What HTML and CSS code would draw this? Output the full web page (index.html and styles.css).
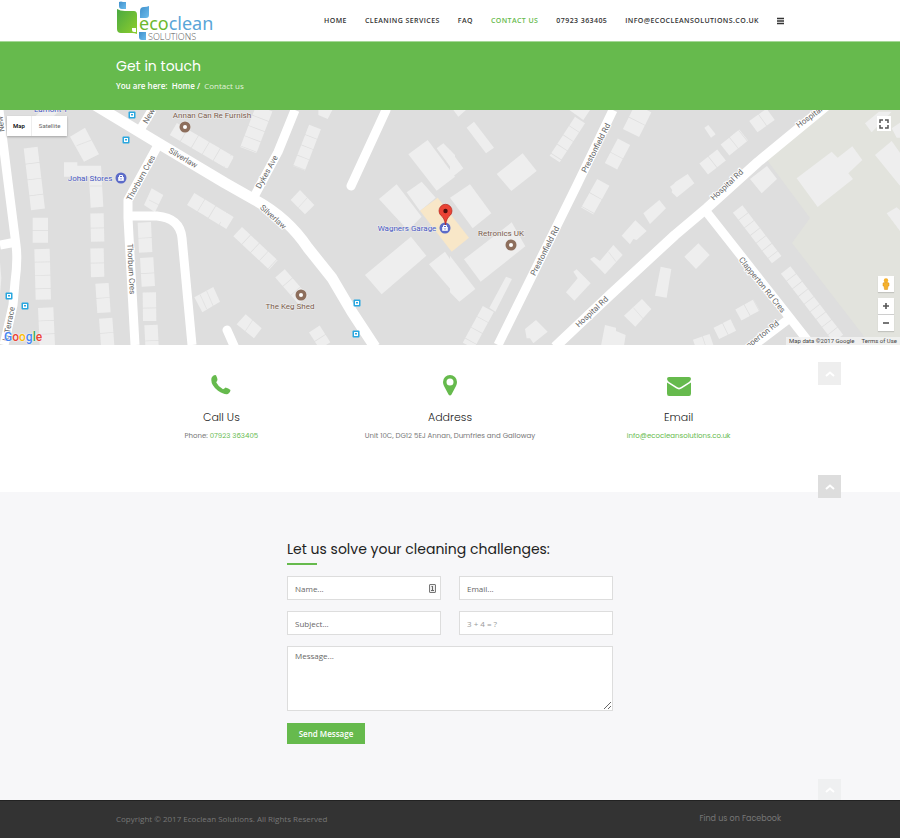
FILE: index.html
```html
<!DOCTYPE html>
<html lang="en">
<head>
<meta charset="utf-8">
<title>Contact us - Ecoclean Solutions</title>
<meta name="viewport" content="width=device-width, initial-scale=1">
<link rel="stylesheet" href="styles.css">
</head>
<body>
<header class="site-header">
  <div class="container header-row">
    <a class="logo" href="#" aria-label="Ecoclean Solutions">
      <svg width="100" height="41" viewBox="0 0 100 41">
        <defs>
          <linearGradient id="leaf" x1="0" y1="0" x2="1" y2="1"><stop offset="0" stop-color="#49a942"/><stop offset="1" stop-color="#8fce2c"/></linearGradient>
          <linearGradient id="sky" x1="0" y1="0" x2="1" y2="1"><stop offset="0" stop-color="#3f8fcb"/><stop offset="1" stop-color="#6cbcec"/></linearGradient>
        </defs>
        <path d="M1 9Q4 11 9 11H18Q21 11 21 15V34Q19 33 16 33H5Q1 33 1 29z" fill="url(#leaf)"/>
        <path d="M3 2Q5 1 7 2H10V9H6Q3 9 3 6z" fill="url(#sky)"/>
        <path d="M33 6V15Q33 18 30 18H24V11Q24 7 28 7 31 7 33 6z" fill="url(#sky)"/>
        <path d="M16 28H20V32H18Q16 32 16 30z" fill="#fff"/>
        <path d="M23 32H30V40H26Q23 40 23 37z" fill="url(#sky)"/>
        <text class="logo-name" x="23" y="30"><tspan fill="#6cb82e">eco</tspan><tspan fill="#59a5d8">clean</tspan></text>
        <text class="logo-sub" x="32" y="40">SOLUTIONS</text>
      </svg>
    </a>
    <nav class="main-nav" aria-label="Main">
      <a href="#">HOME</a>
      <a href="#">CLEANING SERVICES</a>
      <a href="#">FAQ</a>
      <a class="active" href="#">CONTACT US</a>
      <a href="#">07923 363405</a>
      <a href="#">INFO@ECOCLEANSOLUTIONS.CO.UK</a>
      <button class="menu-button" type="button" aria-label="Open menu">
        <svg width="7" height="8" viewBox="0 0 7 8"><path d="M0 1.500h7M0 4h7M0 6.500h7" stroke="#333" stroke-width="1.400"/></svg>
      </button>
    </nav>
  </div>
</header>

<section class="banner">
  <div class="container">
    <h1>Get in touch</h1>
    <p class="crumbs">You are here: &nbsp;<a href="#">Home</a> / &nbsp;<span>Contact us</span></p>
  </div>
</section>

<section class="map" aria-label="Map">
  <svg class="map-canvas" viewBox="0 0 900 235" preserveAspectRatio="xMidYMid slice">
    <rect width="900" height="235" fill="#dedede"/>
    <path d="M822 0 767 50 810 108 792 133 863 225 870 235H900V0z" fill="#e2e3dd"/>
    <!-- house blocks, west -->
    <g transform="translate(0 -5) scale(.33333)" fill="#eee">
      <path d="M210 95 255 68 297 148 252 170zM192 172H232V182H303L310 305 272 308 267 215H192zM455 250 490 270 465 322 432 300zM583 577 640 546 660 590 607 622zM0 470V570L4 520zM100 40 125 15H180L150 45z"/>
      <g class="row">
        <path d="M92 128 114 313" stroke-width="42" stroke-dasharray="46 2"/>
        <path d="M121 338V413M126 432 130 584M137 608 142 722" stroke-width="46" stroke-dasharray="38 2"/>
        <path d="M291 325 293 410M291 430 293 516M306 535 312 624M317 640 323 722" stroke-width="40" stroke-dasharray="43 2"/>
        <path d="M433 352 437 442M440 458 445 544M448 562 449 648M453 660 456 722" stroke-width="40" stroke-dasharray="46 2"/>
        <path d="M520 72 690 172M572 282 690 354" stroke-width="42" stroke-dasharray="36 2"/>
      </g>
      <path d="M230 122 275 105M270 243H306M447 285 477 300M600 568 620 612M620 558 640 604" stroke="#dedede" stroke-width="2"/>
    </g>
    <!-- house blocks, centre west -->
    <g transform="translate(225 -5) scale(.33333)" fill="#eee">
      <path d="M0 140 25 158 8 190-20 175zM225 255 268 300 240 328 197 285zM0 320 18 335 0 362-15 350zM62 628 110 670 87 700 35 658zM280 15H322L308 42 280 30zM550 148 608 105 690 215 635 257zM635 130 655 115 690 150V205zM462 282 515 238 590 335 560 365 545 372zM545 262 590 230 632 278 585 318zM420 510 558 395 604 452 470 568zM612 478 660 440 700 500V580z"/>
      <path d="M585 317 638 278 732 398 680 440z" fill="#f8e7c8"/>
      <g class="row">
        <path d="M118 10 70 135" stroke-width="52" stroke-dasharray="31 2"/>
        <path d="M270 66 222 190" stroke-width="38" stroke-dasharray="31 2"/>
        <path d="M38 380 145 480M165 505 235 585" stroke-width="38" stroke-dasharray="34 2"/>
        <path d="M268 672 300 722" stroke-width="38" stroke-dasharray="31 2"/>
      </g>
      <path d="M85 642 60 680M248 277 220 308" stroke="#dedede" stroke-width="2"/>
    </g>
    <!-- house blocks, centre east -->
    <g transform="translate(450 -5) scale(.33333)" fill="#eee">
      <path d="M50 68 72 50 132 128 108 145zM140 207 218 145 260 198 184 258zM0 278 60 238 124 325 68 370zM0 135 40 190 0 222zM42 463 185 352 226 424 92 530zM0 452 76 552 28 590 0 562zM118 608 168 515 186 522 136 620zM10 15H48L25 35zM358 15H420L400 45zM580 325 628 285 648 310 600 357zM515 392 556 346 590 378 560 405 550 402 540 418zM420 462 432 455 450 468 490 420 518 450 465 508zM348 562 383 520 370 500 380 493 422 535 373 587zM632 485 664 492 650 578 615 572zM522 632 576 582 604 612 556 665zM225 672 258 645 293 680 250 715 240 700 230 700zM465 660 498 668V678L527 690 522 722H453zM660 245 680 230V275z"/>
      <g class="row">
        <path d="M390 45 314 162" stroke-width="36" stroke-dasharray="31 2"/>
        <path d="M115 612 55 722" stroke-width="38" stroke-dasharray="35 2"/>
        <path d="M580 10 543 84" stroke-width="54" stroke-dasharray="42 2"/>
        <path d="M522 110 483 184M460 232 412 318" stroke-width="42" stroke-dasharray="46 2"/>
      </g>
      <path d="M550 608 580 642M475 440 498 470" stroke="#dedede" stroke-width="2"/>
    </g>
    <!-- house blocks, east -->
    <g transform="translate(675 -5) scale(.33333)" fill="#eee">
      <path d="M88 68 100 60 122 88 108 98zM0 232 38 207 58 235 6 277-10 262zM225 222 276 183 306 222 260 265zM28 455 70 415 104 450 63 492zM365 220 470 140 488 158 532 124 562 165 520 205 534 222 428 306zM600 150 650 108 680 150V248zM635 325 665 307 680 320V385zM570 55 612 20H650L590 82zM650 70 680 50V98H665z"/>
      <g class="row">
        <path d="M86 192 140 150M150 135 206 90M235 65 287 28" stroke-width="42" stroke-dasharray="33 2"/>
        <path d="M188 312 305 464M332 495 490 700" stroke-width="36" stroke-dasharray="27 2"/>
        <path d="M190 630 245 600M124 685 175 660M60 722 110 705" stroke-width="38" stroke-dasharray="29 2"/>
      </g>
    </g>
    <g class="roads">
      <path d="M-1 0 8 72 16 135Q18 150 15 172L13 195 4 235M0 135 16 132M140 20 152 0M157 37 128 90V108L135 235M128 106H157Q180 108 182 128L192 235M255 85 278 42 295 0M613 0 577 75 498 235M790 208 750 238M705 100 790 208 815 240" stroke-width="9"/>
      <path d="M95-5 153 30 225 73 255 90Q288 108 308 138L332 168 352 202 375 237" stroke-width="11"/>
      <path d="M555 237 610 185 675 125 707 98 758 52 826-4" stroke-width="10"/>
      <path d="M386 0 351 76M227 220 235 238" stroke-width="9" stroke-linecap="round"/>
    </g>
    <g class="road-names">
      <text transform="translate(149 6) rotate(-60)">New</text>
      <text transform="translate(183 48) rotate(31)">Silverlaw</text>
      <text transform="translate(141 68) rotate(-61)">Thorburn Cres</text>
      <text transform="translate(131 159) rotate(87)">Thorburn Cres</text>
      <text transform="translate(267 62) rotate(-61)">Dykes Ave</text>
      <text transform="translate(273 107) rotate(42)">Silverlaw</text>
      <text transform="translate(596 38) rotate(-63)">Prestonfield Rd</text>
      <text transform="translate(545 141) rotate(-63)">Prestonfield Rd</text>
      <text transform="translate(592 202) rotate(-43)">Hospital Rd</text>
      <text transform="translate(727 75) rotate(-43)">Hospital Rd</text>
      <text transform="translate(814 4) rotate(-36)">Hospital Rd</text>
      <text transform="translate(762 175) rotate(51)">Clapperton Rd Cres</text>
      <text transform="translate(758 228) rotate(-38)">Clapperton Rd</text>
      <text transform="translate(9 214) rotate(-79)">lu Terrace</text>
      <text transform="translate(1 14) rotate(-97)">New</text>
    </g>
    <defs>
      <g id="bus"><rect x="-3.5" y="-3.5" width="7" height="7" rx="1" fill="#2aa7df"/><path d="M-2-2H2V2H-2z" fill="#fff"/><path d="M-1-1H1V.5H-1z" fill="#2aa7df"/></g>
      <g id="dot"><circle r="6" fill="#eee" opacity=".8"/><circle r="5.5" fill="#8d6e5c"/><circle r="2" fill="#fff"/></g>
      <g id="shop"><circle r="5.5" fill="#5c6bc8"/><path d="M-2.8-1H2.8V2.8H-2.8z" fill="#fff"/><path d="M-1.5-1V-2.5H1.5V-1" fill="none" stroke="#fff"/><path d="M-1.2.5Q0 2 1.2.5" fill="none" stroke="#5c6bc8" stroke-width=".7"/></g>
    </defs>
    <use href="#bus" x="132" y="5"/><use href="#bus" x="126" y="30"/><use href="#bus" x="9" y="186"/><use href="#bus" x="25" y="196"/><use href="#bus" x="357" y="193"/><use href="#bus" x="356" y="224"/>
    <use href="#dot" x="185" y="17"/><use href="#dot" x="301" y="185"/><use href="#dot" x="511" y="135"/>
    <use href="#shop" x="121" y="68"/><use href="#shop" x="445" y="118"/>
    <path d="M445.500 115Q444.500 108 441 105.500A6.500 6.500 0 1 1 450 105.500Q446.500 108 445.500 115z" fill="#ea4335" stroke="#b3251d" stroke-width=".7"/>
    <circle cx="445.500" cy="101" r="2.200" fill="#4a0f0d"/>
    <g class="places">
      <text class="brown" x="212" y="8">Annan Can Re Furnish</text>
      <text class="brown" x="290" y="199">The Keg Shed</text>
      <text class="brown" x="501" y="126">Retronics UK</text>
      <text class="blue" x="90" y="71">Johal Stores</text>
      <text class="blue" x="407" y="121">Wagners Garage</text>
      <text class="blue" x="51" y="2">Lamont T</text>
    </g>
  </svg>
  <div class="map-type">
    <button class="selected" type="button">Map</button><button type="button">Satellite</button>
  </div>
  <button class="map-full" type="button" aria-label="Full screen"><svg width="10" height="10" viewBox="0 0 10 10"><path d="M1 4V1H4M6 1H9V4M9 6V9H6M4 9H1V6" fill="none" stroke="#555" stroke-width="1.500"/></svg></button>
  <div class="map-side">
    <button class="peg" type="button" aria-label="Street View"><svg width="8" height="12" viewBox="0 0 8 12"><circle cx="4" cy="2.500" r="2.200" fill="#f5b12c"/><path d="M1 5Q4 3.500 7 5V8H6L5.500 11.500H2.500L2 8H1z" fill="#f5b12c" stroke="#d8901a" stroke-width=".5"/></svg></button>
    <div class="zoom">
      <button type="button" aria-label="Zoom in"><svg width="8" height="8" viewBox="0 0 8 8"><path d="M4 1V7M1 4H7" stroke="#555" stroke-width="1.600"/></svg></button>
      <button type="button" aria-label="Zoom out"><svg width="8" height="8" viewBox="0 0 8 8"><path d="M1 4H7" stroke="#555" stroke-width="1.600"/></svg></button>
    </div>
  </div>
  <div class="google"><span class="g-blue">G</span><span class="g-red">o</span><span class="g-yellow">o</span><span class="g-blue">g</span><span class="g-green">l</span><span class="g-red">e</span></div>
  <div class="map-credit"><span>Map data ©2017 Google</span><a href="#">Terms of Use</a></div>
</section>

<section class="info">
  <div class="info-grid">
    <div class="info-item">
      <svg class="info-icon" width="24" height="24" viewBox="0 0 24 24"><path d="M3 4Q5 1.500 7 2.300 8.200 4.500 8.500 7 7.500 8.500 7.300 9.500 9.500 14 14 16.300 15.500 15.500 16.500 14.500 19.500 15 21.500 17 21.500 19.500 19 21 15 21.800 9 17.800 2.300 12.500 2.300 7 2.200 5 3 4z"/></svg>
      <h2>Call Us</h2>
      <p>Phone: <a href="#">07923 363405</a></p>
    </div>
    <div class="info-item">
      <svg class="info-icon" width="24" height="24" viewBox="0 0 24 24"><path fill-rule="evenodd" d="M12 2A7 7 0 0 1 19 9Q19 11 18 13L13.500 21.500Q12 23.500 10.500 21.500L6 13Q5 11 5 9A7 7 0 0 1 12 2zM12 5.500A3.500 3.500 0 1 0 12 12.500 3.500 3.500 0 1 0 12 5.500z"/></svg>
      <h2>Address</h2>
      <p>Unit 10C, DG12 5EJ Annan, Dumfries and Galloway</p>
    </div>
    <div class="info-item">
      <svg class="info-icon" width="24" height="24" viewBox="0 0 24 24"><path d="M2 4H22Q24 4 24 6 23.500 8 22 9L14 14Q12 15.500 10 14L2 9Q.5 8 0 6 0 4 2 4zM0 9.500 9 15.300Q12 17.500 15 15.300L24 9.500V20.500Q24 23 22 23H2Q0 23 0 20.500z"/></svg>
      <h2>Email</h2>
      <p><a href="#">info@ecocleansolutions.co.uk</a></p>
    </div>
  </div>
  <a class="to-top to-top-first" href="#" aria-label="Back to top"><svg width="10" height="6" viewBox="0 0 10 6"><path d="M1 5 5 1.500 9 5" fill="none" stroke="#fff" stroke-width="2"/></svg></a>
  <a class="to-top to-top-second" href="#" aria-label="Back to top"><svg width="10" height="6" viewBox="0 0 10 6"><path d="M1 5 5 1.500 9 5" fill="none" stroke="#fff" stroke-width="2"/></svg></a>
</section>

<section class="contact">
  <form class="contact-form">
    <h2>Let us solve your cleaning challenges:</h2>
    <div class="fields">
      <div class="field-wrap">
        <input type="text" aria-label="Name" placeholder="Name...">
        <svg class="autofill" width="7" height="9" viewBox="0 0 7 9"><rect x=".5" y=".5" width="6" height="8" rx=".5" fill="#eee" stroke="#777"/><path d="M2.500 3 3.500 2V6M2 6.500H5" fill="none" stroke="#666"/></svg>
      </div>
      <input type="email" aria-label="Email" placeholder="Email...">
      <input type="text" aria-label="Subject" placeholder="Subject...">
      <input class="sum" type="text" aria-label="3 + 4 = ?" placeholder="3 + 4 = ?">
      <textarea aria-label="Message" placeholder="Message..."></textarea>
    </div>
    <button class="send" type="submit">Send Message</button>
  </form>
  <a class="to-top to-top-last" href="#" aria-label="Back to top"><svg width="10" height="6" viewBox="0 0 10 6"><path d="M1 5 5 1.500 9 5" fill="none" stroke="#fff" stroke-width="2"/></svg></a>
</section>

<footer class="site-footer">
  <div class="container footer-row">
    <span>Copyright © 2017 Ecoclean Solutions. All Rights Reserved</span>
    <a href="#">Find us on Facebook</a>
  </div>
</footer>
</body>
</html>
```
FILE: styles.css
```css
* { box-sizing: border-box; }
body { margin: 0; background: #fff; color: #777; font: 8px/16px "Open Sans", sans-serif; }
a { color: #66ba4d; text-decoration: none; }
h1, h2, p { margin: 0; }
button { padding: 0; border: 0; font: inherit; cursor: pointer; }
svg { display: block; }
.container { max-width: 668px; margin: 0 auto; }

.site-header { border-bottom: 1px solid #a5d898; }
.header-row { display: flex; justify-content: space-between; height: 41px; }
.logo-name { font: 400 18px "Noto Sans", sans-serif; }
.logo-sub { font: 300 9px "Open Sans", sans-serif; fill: #555; }
.main-nav { display: flex; align-items: center; gap: 18px; font-size: 7px; font-weight: 600; letter-spacing: .06em; }
.main-nav a { color: #333; }
.main-nav a.active { color: #66ba4d; }
.menu-button { background: none; }

.banner { background: #66ba4d; color: #fff; padding: 14px 0 16px; }
.banner h1 { font: 400 14px/20px Poppins, Inter, sans-serif; }
.crumbs { padding-top: 2px; font-size: 8px; font-weight: 600; }
.crumbs a { color: #fff; }
.crumbs span { color: #e0f1db; font-weight: 400; }

.map { position: relative; height: 235px; overflow: hidden; font-family: Roboto, sans-serif; }
.map-canvas { width: 100%; height: 100%; }
.row path { fill: none; stroke: #eee; }
.roads path { fill: none; stroke: #fff; stroke-linejoin: round; }
.map text { font: 8px Roboto, sans-serif; text-anchor: middle; }
.road-names text { fill: #666; stroke: #fff; stroke-width: 2px; paint-order: stroke; dominant-baseline: central; }
.places text { stroke: #f0f0f0; stroke-width: 1px; paint-order: stroke; }
.places .brown { fill: #795b4b; }
.places .blue { fill: #4757c0; }
.map button { display: flex; align-items: center; justify-content: center; background: #fff; }
.map-type { position: absolute; left: 7px; top: 6px; display: flex; box-shadow: 0 1px 2px #0004; }
.map-type button { height: 20px; padding: 0 7px; color: #666; font-size: 6px; }
.map-type .selected { padding: 0 6px; color: #000; font-weight: 500; border-right: 1px solid #eee; }
.map-full { position: absolute; right: 9px; top: 6px; width: 14px; height: 15px; }
.map-side { position: absolute; right: 6px; bottom: 14px; width: 16px; display: grid; gap: 6px; }
.map-side button { width: 16px; height: 16px; box-shadow: 0 1px 1px #0002; }
.zoom { display: grid; gap: 1px; background: #eee; }
.google { position: absolute; left: 4px; bottom: 0; font: 500 12px/16px Roboto, sans-serif; text-shadow: 0 0 1px #fff, 0 0 2px #fff; }
.g-blue { color: #4285f4; }
.g-red { color: #ea4335; }
.g-yellow { color: #fbbc05; }
.g-green { color: #34a853; }
.map-credit { position: absolute; right: 0; bottom: 0; display: flex; gap: 7px; padding: 0 3px; background: #f3f3f3cc; font-size: 6px; line-height: 8px; }
.map-credit, .map-credit a { color: #444; }

.info { position: relative; padding: 28px 0 48px; font-family: Poppins, Inter, sans-serif; }
.info-grid { display: grid; grid-template-columns: repeat(3, 1fr); max-width: 686px; margin: 0 auto; text-align: center; }
.info-icon { margin: 0 auto 10px; fill: #66ba4d; }
.info h2 { font-size: 11px; font-weight: 300; line-height: 20px; color: #222; }
.info p { padding-top: 1px; font-size: 7px; }
.to-top { position: absolute; left: calc(50% + 368px); display: flex; align-items: center; justify-content: center; width: 23px; height: 23px; background: #eee; }
.to-top-first { top: 17px; }
.to-top-second { bottom: -6px; background: #ddd; z-index: 1; }
.to-top-last { bottom: 0; height: 21px; background: #eff0f1; }

.contact { position: relative; background: #f7f7f9; padding: 46px 16px 56px; }
.contact-form { max-width: 326px; margin: 0 auto; }
.contact h2 { padding-bottom: 4px; font: 400 14px/22px Poppins, Inter, sans-serif; color: #222; }
.contact h2::after { content: ""; display: block; width: 30px; height: 2px; margin-top: 3px; background: #66ba4d; }
.fields { display: grid; grid-template-columns: 1fr 1fr; gap: 11px 18px; padding: 7px 0 12px; }
.field-wrap { position: relative; }
.autofill { position: absolute; right: 5px; top: 8px; }
.fields input, .fields textarea { display: block; width: 100%; height: 24px; padding: 0 7px; border: 1px solid #ddd; border-radius: 0; background: #fff; color: #555; font: 8px/16px "Open Sans", sans-serif; }
.fields textarea { grid-column: 1 / -1; height: 65px; padding: 1px 7px; resize: vertical; }
::placeholder { color: #666; opacity: 1; }
.sum::placeholder { color: #999; }
.send { display: block; width: 78px; height: 21px; background: #66ba4d; color: #fff; font-size: 8px; font-weight: 600; }

.site-footer { background: #333; border-top: 1px solid #222; color: #777; font-size: 8px; }
.footer-row { display: flex; justify-content: space-between; padding: 10px 3px 11px 0; }
.site-footer a { color: #777; font-family: Poppins, Inter, sans-serif; }
```
